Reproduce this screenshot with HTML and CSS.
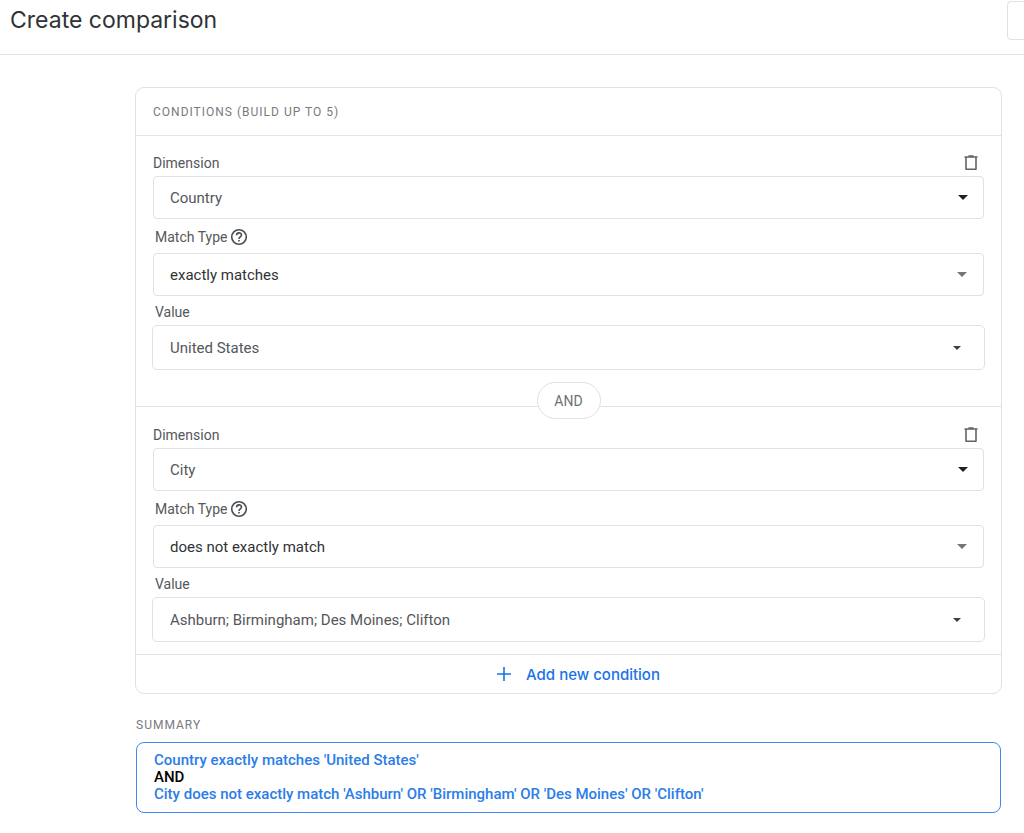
FILE: index.html
```
<!DOCTYPE html>
<html lang="en">
<head>
<meta charset="UTF-8">
<meta name="viewport" content="width=device-width, initial-scale=1">
<title>Create comparison</title>
<link rel="stylesheet" href="styles.css">
</head>
<body>
<header class="top">
	<h1>Create comparison</h1>
	<button type="button" class="top-button" aria-label="Close"></button>
</header>

<main class="content">
	<form class="card">
		<h2 class="card-head">CONDITIONS (BUILD UP TO 5)</h2>

		<section class="condition">
			<div class="label-row first">
				<label for="dimension1">Dimension</label>
				<button type="button" class="delete" aria-label="Delete condition">
					<svg width="14" height="16" viewBox="0 0 14 16"><path d="M0.5 2H13.5M4.5 1H9.5M2 2V14.2H12V2" fill="none" stroke="#5f6368" stroke-width="1.6" stroke-linejoin="round"/></svg>
				</button>
			</div>
			<div class="select">
				<select id="dimension1"><option>Country</option></select>
				<svg class="caret" width="10" height="5" viewBox="0 0 10 5"><path d="M0 0H10L5 5Z"/></svg>
			</div>
			<div class="label-row indent">
				<label for="match1">Match Type</label>
				<svg class="help" width="18" height="18" viewBox="0 0 18 18"><circle cx="9" cy="9" r="7.3"/><path d="M6.6 7.2C6.6 4 11.5 4.1 11.5 7.1C11.5 8.8 9 8.9 9 10.9M9 12V13.6"/></svg>
			</div>
			<div class="select match">
				<select id="match1"><option>exactly matches</option></select>
				<svg class="caret" width="10" height="5" viewBox="0 0 10 5"><path d="M0 0H10L5 5Z"/></svg>
			</div>
			<div class="label-row indent last">
				<label for="value1">Value</label>
			</div>
			<div class="select value">
				<select id="value1"><option>United States</option></select>
				<svg class="caret" width="8" height="4" viewBox="0 0 8 4"><path d="M0 0H8L4 4Z"/></svg>
			</div>
			<span class="and">AND</span>
		</section>

		<section class="condition">
			<div class="label-row first">
				<label for="dimension2">Dimension</label>
				<button type="button" class="delete" aria-label="Delete condition">
					<svg width="14" height="16" viewBox="0 0 14 16"><path d="M0.5 2H13.5M4.5 1H9.5M2 2V14.2H12V2" fill="none" stroke="#5f6368" stroke-width="1.6" stroke-linejoin="round"/></svg>
				</button>
			</div>
			<div class="select">
				<select id="dimension2"><option>City</option></select>
				<svg class="caret" width="10" height="5" viewBox="0 0 10 5"><path d="M0 0H10L5 5Z"/></svg>
			</div>
			<div class="label-row indent">
				<label for="match2">Match Type</label>
				<svg class="help" width="18" height="18" viewBox="0 0 18 18"><circle cx="9" cy="9" r="7.3"/><path d="M6.6 7.2C6.6 4 11.5 4.1 11.5 7.1C11.5 8.8 9 8.9 9 10.9M9 12V13.6"/></svg>
			</div>
			<div class="select match">
				<select id="match2"><option>does not exactly match</option></select>
				<svg class="caret" width="10" height="5" viewBox="0 0 10 5"><path d="M0 0H10L5 5Z"/></svg>
			</div>
			<div class="label-row indent last">
				<label for="value2">Value</label>
			</div>
			<div class="select value">
				<select id="value2"><option>Ashburn; Birmingham; Des Moines; Clifton</option></select>
				<svg class="caret" width="8" height="4" viewBox="0 0 8 4"><path d="M0 0H8L4 4Z"/></svg>
			</div>
		</section>

		<button type="button" class="add">
			<svg width="14" height="14" viewBox="0 0 14 14"><path d="M7 0V14M0 7H14" stroke="#1a73e8" stroke-width="1.6"/></svg>
			Add new condition
		</button>
	</form>

	<h2 class="summary-title">SUMMARY</h2>
	<div class="summary">
		<p>Country exactly matches 'United States'</p>
		<p class="operator">AND</p>
		<p>City does not exactly match 'Ashburn' OR 'Birmingham' OR 'Des Moines' OR 'Clifton'</p>
	</div>
</main>
</body>
</html>
```
FILE: styles.css
```
* {
	box-sizing: border-box;
}

body {
	margin: 0;
	background: #fff;
	color: #54575b;
	font-family: Roboto, "Liberation Sans", sans-serif;
	font-size: 14px;
}

h1, h2, p {
	margin: 0;
	font-weight: 400;
}

button {
	padding: 0;
	border: 0;
	background: none;
	font-family: inherit;
	cursor: pointer;
}

svg {
	display: block;
	flex: none;
}

/* header */
.top {
	display: flex;
	justify-content: space-between;
	align-items: flex-start;
	height: 55px;
	padding-left: 10px;
	border-bottom: 1px solid #dfe1e3;
	overflow: hidden;
}

.top h1 {
	color: #303336;
	font-family: Inter, Roboto, sans-serif;
	font-size: 23px;
	line-height: 41px;
}

/* runs past the right edge of the window */
.top-button {
	width: 40px;
	height: 39px;
	margin: 1px -23px 0 0;
	border: 1px solid #dfe1e5;
	border-radius: 4px;
}

.content {
	margin: 32px 22px 20px 135px;
}

/* conditions */
.card {
	border: 1px solid #dfe1e3;
	border-radius: 9px;
}

.card-head {
	padding: 1px 0 0 17px;
	border-bottom: 1px solid #e3e4e6;
	color: #777b80;
	font-size: 12px;
	line-height: 46px;
	letter-spacing: 1px;
}

.condition {
	position: relative;
	padding: 14px 17px 36px;
	border-bottom: 1px solid #e3e4e6;
}

.condition + .condition {
	padding-top: 15px;
	padding-bottom: 12px;
}

.label-row {
	display: flex;
	align-items: center;
	gap: 3px;
	height: 34px;
	padding-top: 2px;
}

.label-row.first {
	justify-content: space-between;
	height: 26px;
	padding: 0 6px 0 0;
}

.label-row.indent {
	padding-left: 2px;
}

.label-row.last {
	height: 29px;
}

.help {
	fill: none;
	stroke: #4a4d51;
	stroke-width: 1.6;
}

.select {
	position: relative;
}

.select select {
	appearance: none;
	display: block;
	width: 100%;
	height: 43px;
	padding: 0 40px 0 16px;
	border: 1px solid #dfe1e5;
	border-radius: 4px;
	background: #fff;
	color: #54575b;
	font-family: inherit;
	font-size: 15px;
}

.caret {
	position: absolute;
	top: 19px;
	right: 16px;
	fill: #202124;
	pointer-events: none;
}

.match select {
	color: #303336;
}

.match .caret {
	right: 17px;
	fill: #757575;
}

.value {
	margin: 0 -1px;
}

.value select {
	height: 45px;
	padding-left: 17px;
	border-radius: 5px;
}

.value .caret {
	top: 21px;
	right: 24px;
	fill: #3c4043;
}

/* sits on the line between two conditions */
.and {
	position: absolute;
	left: 50%;
	bottom: -13px;
	width: 64px;
	height: 37px;
	margin-left: -32px;
	border: 1px solid #dfe1e5;
	border-radius: 19px;
	background: #fff;
	color: #6d7176;
	line-height: 36px;
	text-align: center;
	z-index: 1;
}

.add {
	display: flex;
	justify-content: center;
	align-items: center;
	gap: 15px;
	width: 100%;
	height: 38px;
	padding-left: 20px;
	color: #1a73e8;
	font-family: Inter, Roboto, sans-serif;
	font-size: 15px;
	font-weight: 500;
}

/* summary */
.summary-title {
	margin: 23px 0 9px 1px;
	color: #777b80;
	font-size: 12px;
	line-height: 16px;
	letter-spacing: 1px;
}

.summary {
	margin: 0 1px;
	padding: 9px 17px;
	border: 1px solid #4285f4;
	border-radius: 8px;
	color: #2b7de9;
	line-height: 17px;
}

.summary p {
	font-size: 15px;
	font-weight: 500;
}

.summary .operator {
	color: #000;
}
```
